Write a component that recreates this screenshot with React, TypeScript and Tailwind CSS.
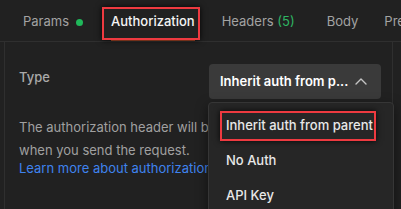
import React from 'react';

const tabs = [
  { label: 'Params', dot: true },
  { label: 'Authorization', active: true },
  { label: 'Headers', count: 5 },
  { label: 'Body' },
  { label: 'Pre-request Script' },
];

const authTypes = ['Inherit auth from parent', 'No Auth', 'API Key', 'Bearer Token'];

const ChevronUp: React.FC = () => (
  <svg width="12" height="7" viewBox="0 0 12 7" fill="none" className="shrink-0">
    <path d="M1 6 L6 1 L11 6" stroke="#c4c4c4" strokeWidth="1.4" strokeLinecap="round" strokeLinejoin="round" />
  </svg>
);

export default function App() {
  return (
    <div
      className="relative w-[401px] h-[209px] overflow-hidden bg-[#212121] text-[13px]"
      style={{ fontFamily: 'Inter, "Noto Sans", sans-serif' }}
    >
      {/* tab bar */}
      <div className="flex h-[42px] items-center border-b border-[#2f2f2f] pl-[23px] pt-[3px] whitespace-nowrap">
        <div className="flex items-center text-[#a3a3a3]">
          Params
          <span className="ml-[7px] h-[7px] w-[7px] rounded-full bg-[#1fb85a]" />
        </div>
        <div className="relative ml-[28px] flex h-full items-center font-medium text-[#f4f4f4]">
          Authorization
          <span className="absolute bottom-0 left-0 right-0 h-[2px] bg-[#c0502c]" />
          <span className="absolute left-[-9px] right-[-5px] top-[4px] h-[33px] border-2 border-[#ee3a40] shadow-[0_0_6px_rgba(0,0,0,0.9)]" />
        </div>
        <div className="ml-[27px] text-[#a3a3a3]">
          Headers <span className="text-[#2fb463]">(5)</span>
        </div>
        <div className="ml-[32px] text-[#a3a3a3]">Body</div>
        <div className="ml-[26px] text-[#a3a3a3]">Pre-request Script</div>
      </div>

      {/* content */}
      <div className="ml-[4px] mr-[8px] flex h-[167px] border-l border-r border-[#2f2f2f]">
        <div className="flex-1 pl-[14px] pr-[11px] pt-[22px]">
          <div className="flex items-start justify-between">
            <div className="mt-[3px] font-medium leading-[20px] text-[#a9a9a9]">Type</div>
            <div className="flex h-[35px] w-[172px] items-center justify-between rounded-[4px] bg-[#3a3a3a] pl-[11px] pr-[14px]">
              <span className="font-semibold text-white">Inherit auth from p...</span>
              <ChevronUp />
            </div>
          </div>
          <p className="mt-[17px] max-w-[360px] leading-[23px] text-[#a0a0a0]">
            The authorization header will be automatically generated when you send the request.
          </p>
          <div className="leading-[13px] text-[#3f83ef] whitespace-nowrap">Learn more about authorization</div>
        </div>
      </div>

      {/* open dropdown */}
      <div className="absolute left-[208px] top-[102px] w-[186px] rounded-t-[4px] border border-[#363636] bg-[#262626] pt-[5px] shadow-[0_4px_12px_rgba(0,0,0,0.5)]">
        {authTypes.map((t, i) => (
          <div key={t} className="relative flex h-[35px] items-center pl-[17px] font-medium text-[#e8e8e8] whitespace-nowrap">
            {t}
            {i === 0 && (
              <span className="absolute left-[11px] top-[3px] h-[30px] w-[156px] border-2 border-[#ee3a40] shadow-[0_0_6px_rgba(0,0,0,0.9)]" />
            )}
          </div>
        ))}
      </div>
    </div>
  );
}
